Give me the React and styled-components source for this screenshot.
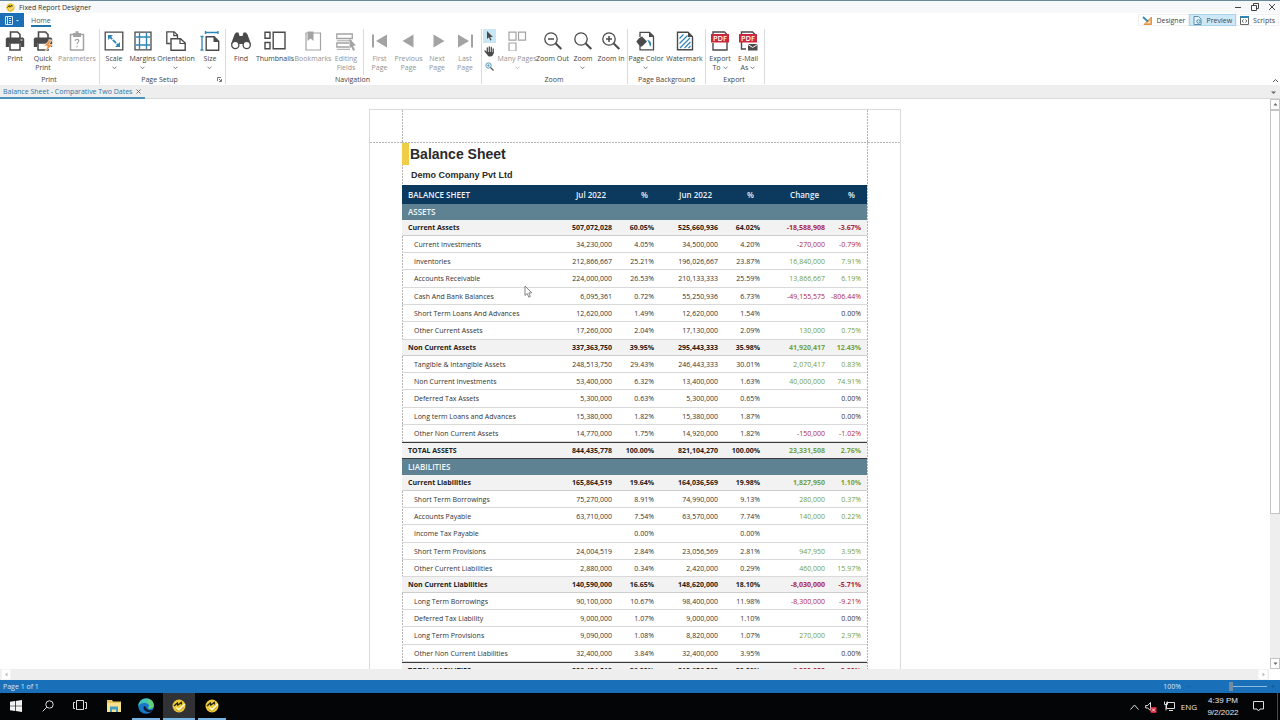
import React from "react";
import styled, { createGlobalStyle, css } from "styled-components";

const Global = createGlobalStyle`
  * { box-sizing: border-box; }
  html, body { margin: 0; height: 100%; }
  body { font-family: "Open Sans", "Noto Sans", sans-serif; font-size: 7px; line-height: 9px; color: #444; background: #fff; overflow: hidden; }
  button { font: inherit; color: inherit; border: 0; padding: 0; margin: 0; background: none; }
  svg { display: block; flex: none; }
`;

const Window = styled.div`
  height: 100vh;
  display: flex;
  flex-direction: column;
  border-top: 1px solid #67899b;
`;

/* Title bar */
const TitleBar = styled.header`
  height: 12px;
  flex: none;
  display: flex;
  align-items: center;
  gap: 4px;
  padding: 0 4px 0 6px;
  background: #f7f8f9;
`;
const Title = styled.h1`
  flex: 1;
  margin: 0;
  font-size: 7px;
  font-weight: 400;
  color: #333;
`;
const WindowButtons = styled.div`
  display: flex;
  gap: 9px;
`;

/* Ribbon tabs */
const TabRow = styled.nav`
  height: 14px;
  flex: none;
  display: flex;
  align-items: stretch;
  padding-right: 1px;
`;
const FileButton = styled.button`
  width: 24px;
  background: #1a6fb7;
  display: flex;
  align-items: center;
  justify-content: center;
  gap: 2px;
`;
const HomeTab = styled.button`
  margin-left: 7px;
  color: #3d5a70;
  padding-top: 3px;
  border-bottom: 2px solid #2273ad;
`;
const Spacer = styled.div`
  flex: 1;
`;
const ViewTabs = styled.div`
  display: flex;
  align-items: center;
`;
const ViewTab = styled.button`
  height: 12px;
  display: flex;
  align-items: center;
  gap: 4px;
  padding: 0 3px;
  border: 1px solid ${(p) => (p.$active ? "#a9d3ea" : "#f0f0f0")};
  background: ${(p) => (p.$active ? "#cde8f6" : "#fff")};
`;

/* Ribbon */
const Ribbon = styled.section`
  height: 58px;
  flex: none;
  display: flex;
  padding: 2px 0 1px;
`;
const Group = styled.div`
  display: flex;
  flex-direction: column;
  border-right: 1px solid #dadada;
  padding: 0 ${(p) => p.$padRight || 0}px 0 ${(p) => p.$padLeft || 0}px;
`;
const GroupItems = styled.div`
  flex: 1;
  display: flex;
  align-items: stretch;
`;
const GroupLabel = styled.div`
  position: relative;
  height: 9px;
  padding-right: ${(p) => (p.$launcher ? 6 : 0)}px;
  text-align: center;
  color: #444;
`;
const Launcher = styled.button`
  position: absolute;
  right: 3px;
  top: 2px;
`;
const Tool = styled.button`
  width: ${(p) => p.$w}px;
  display: flex;
  flex-direction: column;
  align-items: center;
  padding-top: 2px;
  white-space: nowrap;
  color: ${(p) => (p.$off ? "#939393" : "#444")};
`;
const ToolText = styled.span`
  display: flex;
  flex-direction: column;
  align-items: center;
  margin-top: 3px;
`;
const ToolLine = styled.span`
  display: flex;
  align-items: center;
  justify-content: center;
  gap: 2px;
  min-height: 9px;
`;
const InnerRule = styled.div`
  width: 1px;
  margin: 0 1px 0 3px;
  background: #dadada;
`;
const PointerTools = styled.div`
  width: 13px;
  margin-right: 2px;
  display: flex;
  flex-direction: column;
  gap: 1px;
`;
const PointerTool = styled.button`
  height: 14px;
  display: flex;
  align-items: center;
  justify-content: center;
  background: ${(p) => (p.$active ? "#c9e6f5" : "transparent")};
`;
const CollapseRibbon = styled.button`
  align-self: flex-end;
  padding: 0 1px 1px;
`;

/* Document tabs */
const DocTabs = styled.div`
  height: 14px;
  flex: none;
  display: flex;
  align-items: stretch;
  justify-content: space-between;
  padding-right: 4px;
  background: #eeeeee;
  box-shadow: inset 0 -1px #d9d9d9;
`;
const DocTab = styled.div`
  width: 145px;
  display: flex;
  align-items: center;
  justify-content: space-between;
  padding: 1px 4px 0 3px;
  color: #2f74a8;
  white-space: nowrap;
  border-bottom: 2px solid #4c93bb;
`;

/* Viewer */
const Viewer = styled.main`
  flex: 1;
  min-height: 0;
  display: flex;
`;
const Canvas = styled.div`
  flex: 1;
  min-width: 0;
  overflow: hidden;
  padding-top: 10px;
`;
const VScroll = styled.div`
  width: 10px;
  display: flex;
  flex-direction: column;
  background: #eeeeee;
`;
const ScrollButton = styled.button`
  width: 10px;
  height: 11px;
  display: flex;
  align-items: center;
  justify-content: center;
  background: #fff;
  border: 1px solid ${(p) => (p.$soft ? "#f4f4f4" : "#c4c4c4")};
`;
const VThumb = styled.div`
  flex: 403;
  background: #fff;
  border: 1px solid #c4c4c4;
`;
const VRest = styled.div`
  flex: 145;
`;
const HScroll = styled.div`
  height: 11px;
  flex: none;
  display: flex;
  justify-content: space-between;
  padding: 0 1px;
  margin-right: 11px;
  background: #eeeeee;
`;

/* Report page */
const Paper = styled.article`
  position: relative;
  width: 532px;
  margin: 0 auto;
  display: grid;
  grid-template-columns: 32px 1fr 32px;
  grid-template-rows: 33px 1fr;
  border: 1px solid #dadada;
  background: #fff;
`;
const guide = "#b4b4b4";
const dashX = `repeating-linear-gradient(90deg, ${guide} 0 2px, #fff 2px 3px)`;
const dashY = `repeating-linear-gradient(${guide} 0 2px, #fff 2px 3px)`;
const Margin = styled.div`
  background: ${(p) => (p.$top ? dashX : "none")} bottom / 100% 1px no-repeat;
`;
const TopMargin = styled.div`
  background:
    ${dashX} bottom / 100% 1px no-repeat,
    ${dashY} left / 1px 100% no-repeat,
    ${dashY} right / 1px 100% no-repeat;
`;
const Report = styled.div`
  padding-right: 1px;
  min-height: 600px;
  background:
    ${dashY} left / 1px 100% no-repeat,
    ${dashY} right / 1px 100% no-repeat;
`;
const ReportTitle = styled.h2`
  margin: 0;
  height: 22px;
  border-left: 7px solid #f0cd47;
  padding-left: 1px;
  font: bold 14px/23px "Liberation Sans", Arial, sans-serif;
  color: #2a2a2a;
`;
const Company = styled.h3`
  margin: 0;
  height: 20px;
  padding-left: 9px;
  font: bold 9px/20px "Liberation Sans", Arial, sans-serif;
  color: #2a2a2a;
`;
const Sheet = styled.table`
  width: 100%;
  table-layout: fixed;
  border-spacing: 0;
  font-size: 7px;
  line-height: 9px;
  color: #333;
  th, td { padding: 0 6px 0 0; text-align: right; white-space: nowrap; }
  th:first-child { text-align: left; padding-left: 6px; }
`;
const Col = styled.col`
  width: ${(p) => p.$w}px;
`;
const HeadRow = styled.tr`
  height: 19px;
  && th { padding-right: 12px; }
  th { background: #0c3a5f; color: #e9f1f7; font-size: 8px; line-height: 10px; font-weight: 600; }
`;
const SectionRow = styled.tr`
  height: 16px;
  th { background: #5f8293; color: #f2f7fa; font-size: 8px; line-height: 10px; font-weight: 600; }
`;
const GroupRow = styled.tr`
  height: 16px;
  color: #222;
  th, td { background: #f2f2f2; font-weight: 700; border-bottom: 1px solid #cdcdcd; }
`;
const TotalRow = styled(GroupRow)`
  height: 17px;
  th, td { border-top: 1px solid #3b3b3b; border-bottom: 1px solid #3b3b3b; }
`;
const ItemRow = styled.tr`
  height: 17px;
  &:nth-child(3n + 1) { height: 18px; }
  th, td { font-weight: 400; border-bottom: 1px solid #d9d9d9; }
  && th { padding-left: 12px; }
`;
const Delta = styled.td`
  ${(p) => p.$sign === "-" && css`color: #b0263a;`}
  ${(p) => p.$sign === "+" && css`color: #76a03a;`}
`;
const Pointer = styled.svg`
  position: absolute;
  left: 154px;
  top: 175px;
`;

/* Status bar */
const StatusBar = styled.footer`
  height: 13px;
  flex: none;
  display: flex;
  align-items: center;
  padding: 0 4px 0 3px;
  gap: 3px;
  background: #1a70b8;
  color: #d5e7f5;
`;
const ZoomBox = styled.label`
  margin-right: 2px;
`;
const ZoomRange = styled.input`
  appearance: none;
  width: 72px;
  height: 9px;
  margin: 0;
  background: linear-gradient(90deg, transparent 50%, #8bbbe0 50%) center / 100% 1px no-repeat;
  &::-webkit-slider-thumb { appearance: none; width: 4px; height: 9px; background: #6f8ca3; }
`;
const Sign = styled.button`
  width: 6px;
  color: #0f4f88;
`;

/* Taskbar */
const Taskbar = styled.div`
  height: 27px;
  flex: none;
  display: flex;
  align-items: stretch;
  background: #040507;
  color: #e8e8e8;
`;
const TaskButton = styled.button`
  width: ${(p) => p.$w || 33}px;
  display: flex;
  align-items: center;
  justify-content: center;
  background: ${(p) => (p.$active ? "#303236" : "transparent")};
  border-bottom: 2px solid ${(p) => (p.$open ? "#78b4e4" : "transparent")};
  background-clip: border-box;
`;
const TaskGroup = styled.div`
  display: flex;
  gap: ${(p) => p.$gap || 0}px;
`;
const Tray = styled.div`
  display: flex;
  align-items: center;
  gap: 6px;
  padding-right: 2px;
  font-size: 8px;
`;
const Clock = styled.time`
  width: 40px;
  margin-right: 4px;
  text-align: center;
  font: 8px/12px "Liberation Sans", Arial, sans-serif;
`;
const TrayEdge = styled.span`
  width: 1px;
  align-self: stretch;
  margin-left: 7px;
  background: #4a4a4a;
`;

const D = "#4a4a4a";
const G = "#a3a3a3";
const B = "#2f86b4";

const Ico = ({ children, s = 20 }) => (
  <svg width={s} height={s} viewBox="0 0 20 20" fill="none" aria-hidden="true">{children}</svg>
);
const Down = ({ c = "#777" }) => (
  <svg width="5" height="4" viewBox="0 0 5 4" fill="none" stroke={c}><path d="M.5 .7 2.5 2.7 4.5 .7" /></svg>
);
const Triangle = ({ d, c = "#666" }) => (
  <svg width="5" height="5" viewBox="0 0 5 5" fill={c}><path d={d} /></svg>
);

const printerShape = (
  <>
    <path d="M5.500 8V1h7l2.500 2.500v4" stroke={D} strokeWidth="1.600" />
    <path d="M2 6.500h16l1.200 1.200V16H16v-4H4v4H.8V7.700z" fill={D} />
    <path d="M5 12h10v7H5z" stroke={D} strokeWidth="1.600" fill="#fff" />
    <path d="M15.500 9h2" stroke="#fff" />
  </>
);
const lens = (
  <>
    <circle cx="8" cy="8" r="6.200" stroke={D} strokeWidth="1.300" />
    <path d="M12.700 12.500 18.300 18" stroke={D} strokeWidth="2" />
  </>
);
const pdfBand = (
  <>
    <rect x="1" y="3" width="18" height="8.500" fill="#c9283d" />
    <text x="10" y="9.900" textAnchor="middle" fontFamily="Open Sans" fontSize="7.500" fontWeight="600" fill="#fff">PDF</text>
  </>
);

const icons = {
  print: printerShape,
  quick: <>{printerShape}<path d="m16.500 9-5.500 6h3.500L12 20.500l8-7h-4l3-4.500z" fill="#f0903c" stroke="#fff" strokeWidth=".6" /></>,
  params: <><path d="M3.500 3.500h13v15.500h-13z" stroke={G} strokeWidth="1.500" /><path d="M6 2h2.500V.3h3V2H14v4H6z" fill={G} /><path d="M8.200 10c0-2.200 3.600-2.200 3.600 0 0 1.300-1.800 1.500-1.800 3.300M10 14.700v1.500" stroke={G} strokeWidth="1.200" /></>,
  scale: <><path d="M1.200 1.200h17.600v17.600H1.200z" stroke={D} strokeWidth="1.300" /><path d="M4 4h5L4 9zM16 16h-5l5-5z" fill={B} /><path d="m5 5 10 10" stroke={B} strokeWidth="1.800" strokeDasharray="4.500 1" /></>,
  margins: <><path d="M2 1.200h16v17.600H2z" stroke={D} strokeWidth="1.300" /><path d="M6.500 2v16M13.500 2v16M3 6h14M3 14h14" stroke={B} strokeWidth="1.400" /></>,
  orientation: <><path d="M4.500 12.500H.8V.8h7.400l3.300 3.300V7" stroke={D} strokeWidth="1.300" /><path d="M7.800 1v3.700h3.700" stroke={D} strokeWidth="1.200" /><path d="M5 7.700h9.500l4.700 4.300v7.200H5z" stroke={D} strokeWidth="1.400" fill="#fff" /><path d="M14 8v4.500h5" stroke={D} strokeWidth="1.200" /></>,
  size: <><path d="M5.500 1.500h12.500M5.500 0v3M18 0v3M2 5.500v13.500M.5 5.500h3M.5 19h3" stroke={B} strokeWidth="1.300" /><path d="M6.200 5.700h8l4.500 4.500v9H6.200z" stroke={D} strokeWidth="1.400" /><path d="M13.500 5.500V11H19z" fill={D} /></>,
  find: <><path d="M3.500 3.500 5 1.500h2.500L8.500 5h3l1-3.500H15l1.500 2L20 13H0z" fill={D} /><circle cx="4.300" cy="14" r="3.600" fill="#fff" stroke={D} strokeWidth="1.300" /><circle cx="15.700" cy="14" r="3.600" fill="#fff" stroke={D} strokeWidth="1.300" /><path d="M8.500 8h3v5h-3z" fill={D} /></>,
  bookmarks: <><path d="M3 2h14.500v17H3z" stroke={G} strokeWidth="1.200" /><path d="M4.500 .5h6v9.500l-3-2.500-3 2.500z" fill={G} /></>,
  editing: <><path d="M.8 3h15.500v4.500H.8zM13 12H.8v4H13" stroke={G} strokeWidth="1.300" /><path d="M.8 9.800h15M.8 18.300H14" stroke={G} /><path d="m13.500 7.500 6.500 7-3 .3 2 4.200-2 .8-1.800-4-1.700 1.900z" fill={G} /></>,
  first: <><path d="M3 3.500v13" stroke={G} strokeWidth="2" /><path d="M17 3.500v13L6 10z" fill={G} /></>,
  prev: <path d="M14.500 3.500v13L3.500 10z" fill={G} />,
  next: <path d="M6.500 3.500v13L17.500 10z" fill={G} />,
  last: <><path d="M17 3.500v13" stroke={G} strokeWidth="2" /><path d="M3 3.500v13L14 10z" fill={G} /></>,
  many: <path d="M2 1.200h7v8H2zM11.500 1.200h7v8h-7zM2 12h7v8H2z" stroke={G} strokeWidth="1.200" />,
  zoomOut: <>{lens}<path d="M5 8h6" stroke={D} strokeWidth="1.500" /></>,
  zoom: lens,
  zoomIn: <>{lens}<path d="M5 8h6M8 5v6" stroke={D} strokeWidth="1.500" /></>,
  pageColor: <><path d="M4 6V1.300h9.500l4 4v13.500H4V15" stroke={D} strokeWidth="1.300" /><path d="M13 1v5h4.500z" fill={D} /><path d="m.3 10.500 3-3.500L6 5.500l5 5L6 15.500H4z" fill={D} /><path d="M11 9c3.500 .2 5 3 3.500 6.500-1.300-.5-1.300-4.500-3.500-6.500z" fill={B} /></>,
  watermark: <><path d="M2.500 1.200H13l4.500 4.500v13.100h-15z" stroke={D} strokeWidth="1.400" /><path d="M13 1v5h4.500z" fill={D} /><path d="m4.500 7.500 4-4M4.500 12.500l8-8M5 17l10-10M9.500 17l6-6M13.500 17l2-2" stroke={B} strokeWidth="1.200" /></>,
  exportTo: <><path d="M3 4V1h11.500L17 3.500V19H3v-7" stroke={D} strokeWidth="1.400" />{pdfBand}</>,
  email: <><path d="M3.500 4V1h11L17 3.500M3.500 11v7H8" stroke={D} strokeWidth="1.400" />{pdfBand}<path d="M10 13h9.500v6.500H10z" fill={D} /><path d="m10 13.500 4.700 3 4.800-3" stroke="#fff" /></>,
};
const thumbIcon = (
  <svg width="22" height="20" viewBox="0 0 22 20" fill="none" stroke={D} strokeWidth="1.400">
    <path d="M1 1.200h5v6H1zM1 11.500h5v6.300H1zM9.200 1.200H21v16.600H9.200z" />
  </svg>
);

const ribbon = [
  { label: "Print", padLeft: 1, padRight: 2, items: [
    { i: "print", w: 28, t: ["Print"] },
    { i: "quick", w: 28, t: ["Quick", "Print"] },
    { i: "params", w: 40, t: ["Parameters"], off: true },
  ] },
  { label: "Page Setup", launcher: true, items: [
    { i: "scale", w: 28, t: ["Scale"], menu: true },
    { i: "margins", w: 29, t: ["Margins"], menu: true },
    { i: "orientation", w: 38, t: ["Orientation"], menu: true },
    { i: "size", w: 30, t: ["Size"], menu: true },
  ] },
  { label: "Navigation", padRight: 2, items: [
    { i: "find", w: 30, t: ["Find"] },
    { i: "thumbs", w: 38, t: ["Thumbnails"] },
    { i: "bookmarks", w: 38, t: ["Bookmarks"], off: true },
    { i: "editing", w: 28, t: ["Editing", "Fields"], off: true },
    { rule: true },
    { i: "first", w: 29, t: ["First", "Page"], off: true },
    { i: "prev", w: 29, t: ["Previous", "Page"], off: true },
    { i: "next", w: 28, t: ["Next", "Page"], off: true },
    { i: "last", w: 28, t: ["Last", "Page"], off: true },
  ] },
  { label: "Zoom", padLeft: 1, padRight: 2, pointers: true, items: [
    { i: "many", w: 38, t: ["Many Pages"], off: true, menu: true },
    { i: "zoomOut", w: 33, t: ["Zoom Out"] },
    { i: "zoom", w: 28, t: ["Zoom"], menu: true },
    { i: "zoomIn", w: 28, t: ["Zoom In"] },
  ] },
  { label: "Page Background", items: [
    { i: "pageColor", w: 36, t: ["Page Color"], menu: true },
    { i: "watermark", w: 41, t: ["Watermark"] },
  ] },
  { label: "Export", padRight: 2, items: [
    { i: "exportTo", w: 28, t: ["Export", "To"], inline: true },
    { i: "email", w: 28, t: ["E-Mail", "As"], inline: true },
  ] },
];

const RibbonTool = ({ item }) => (
  <Tool $w={item.w} $off={item.off} type="button">
    {item.i === "thumbs" ? thumbIcon : <Ico>{icons[item.i]}</Ico>}
    <ToolText>
      {item.t.map((line, n) => (
        <ToolLine key={line}>{line}{item.inline && n === 1 && <Down />}</ToolLine>
      ))}
      {item.menu && <ToolLine><Down c={item.off ? "#bbb" : "#777"} /></ToolLine>}
    </ToolText>
  </Tool>
);

const Pointers = () => (
  <PointerTools>
    <PointerTool $active type="button" aria-label="Select">
      <svg width="7" height="10" viewBox="0 0 7 10" fill={D}><path d="M1 0v8l2-1.800L4.300 9.500l1.200-.5-1.300-3H7z" /></svg>
    </PointerTool>
    <PointerTool type="button" aria-label="Hand">
      <svg width="11" height="11" viewBox="0 0 11 11" fill="none" stroke={D} strokeWidth="1.300" strokeLinecap="round"><path d="M3.300 6V2M5.300 6V1M7.300 6V1.500M9.200 6.500V3M1 5l2.500 3" /><path d="M3 6h6.700c0 2.500-1 4.500-3.700 4.500S3.300 8.500 3 6z" fill={D} stroke="none" /></svg>
    </PointerTool>
    <PointerTool type="button" aria-label="Magnifier">
      <svg width="9" height="9" viewBox="0 0 9 9" fill="#d8edf7" stroke="#6ba2bd"><circle cx="3.500" cy="3.500" r="2.700" /><path d="m5.500 5.500 3 3" stroke="#666" strokeWidth="1.400" /><path d="M2 3.500h3M3.500 2v3" strokeWidth=".7" /></svg>
    </PointerTool>
  </PointerTools>
);

const AppLogo = ({ s }) => (
  <svg width={s} height={s} viewBox="0 0 14 14">
    <circle cx="7" cy="7" r="6.500" fill="#efcb35" />
    <path d="M2 7 5.300 4 5.800 6 9.300 3.500 9.500 5.500" fill="none" stroke="#2a2618" strokeWidth="1.400" />
    <path d="m4.500 8.500 2.500 2.300L12.800 5" fill="none" stroke="#fff8d8" strokeWidth="1.500" />
    <path d="m3.800 10.300 3.200 2.200L12 8" fill="none" stroke="#a5861c" strokeWidth=".6" />
  </svg>
);

const sheet = [
  { section: "ASSETS", groups: [
    { head: ["Current Assets", "507,072,028", "60.05%", "525,660,936", "64.02%", "-18,588,908", "-3.67%"], rows: [
      ["Current Investments", "34,230,000", "4.05%", "34,500,000", "4.20%", "-270,000", "-0.79%"],
      ["Inventories", "212,866,667", "25.21%", "196,026,667", "23.87%", "16,840,000", "7.91%"],
      ["Accounts Receivable", "224,000,000", "26.53%", "210,133,333", "25.59%", "13,866,667", "6.19%"],
      ["Cash And Bank Balances", "6,095,361", "0.72%", "55,250,936", "6.73%", "-49,155,575", "-806.44%"],
      ["Short Term Loans And Advances", "12,620,000", "1.49%", "12,620,000", "1.54%", "", "0.00%"],
      ["Other Current Assets", "17,260,000", "2.04%", "17,130,000", "2.09%", "130,000", "0.75%"],
    ] },
    { head: ["Non Current Assets", "337,363,750", "39.95%", "295,443,333", "35.98%", "41,920,417", "12.43%"], rows: [
      ["Tangible & Intangible Assets", "248,513,750", "29.43%", "246,443,333", "30.01%", "2,070,417", "0.83%"],
      ["Non Current Investments", "53,400,000", "6.32%", "13,400,000", "1.63%", "40,000,000", "74.91%"],
      ["Deferred Tax Assets", "5,300,000", "0.63%", "5,300,000", "0.65%", "", "0.00%"],
      ["Long term Loans and Advances", "15,380,000", "1.82%", "15,380,000", "1.87%", "", "0.00%"],
      ["Other Non Current Assets", "14,770,000", "1.75%", "14,920,000", "1.82%", "-150,000", "-1.02%"],
    ] },
  ], total: ["TOTAL ASSETS", "844,435,778", "100.00%", "821,104,270", "100.00%", "23,331,508", "2.76%"] },
  { section: "LIABILITIES", groups: [
    { head: ["Current Liabilities", "165,864,519", "19.64%", "164,036,569", "19.98%", "1,827,950", "1.10%"], rows: [
      ["Short Term Borrowings", "75,270,000", "8.91%", "74,990,000", "9.13%", "280,000", "0.37%"],
      ["Accounts Payable", "63,710,000", "7.54%", "63,570,000", "7.74%", "140,000", "0.22%"],
      ["Income Tax Payable", "", "0.00%", "", "0.00%", "", ""],
      ["Short Term Provisions", "24,004,519", "2.84%", "23,056,569", "2.81%", "947,950", "3.95%"],
      ["Other Current Liabilities", "2,880,000", "0.34%", "2,420,000", "0.29%", "460,000", "15.97%"],
    ] },
    { head: ["Non Current Liabilities", "140,590,000", "16.65%", "148,620,000", "18.10%", "-8,030,000", "-5.71%"], rows: [
      ["Long Term Borrowings", "90,100,000", "10.67%", "98,400,000", "11.98%", "-8,300,000", "-9.21%"],
      ["Deferred Tax Liability", "9,000,000", "1.07%", "9,000,000", "1.10%", "", "0.00%"],
      ["Long Term Provisions", "9,090,000", "1.08%", "8,820,000", "1.07%", "270,000", "2.97%"],
      ["Other Non Current Liabilities", "32,400,000", "3.84%", "32,400,000", "3.95%", "", "0.00%"],
    ] },
  ], total: ["TOTAL LIABILITIES", "306,454,519", "36.29%", "312,656,569", "38.08%", "-6,202,050", "-2.02%"] },
];

const Cells = ({ row }) => {
  const sign = !row[5] ? "" : row[5][0] === "-" ? "-" : "+";
  return (
    <>
      <th scope="row">{row[0]}</th>
      {row.slice(1, 5).map((v, n) => <td key={n}>{v}</td>)}
      <Delta $sign={sign}>{row[5]}</Delta>
      <Delta $sign={sign}>{row[6]}</Delta>
    </>
  );
};

const BalanceTable = () => (
  <Sheet>
    <colgroup>
      {[151, 65, 42, 64, 42, 65, 36].map((w, n) => <Col key={n} $w={w} />)}
    </colgroup>
    <thead>
      <HeadRow>
        {["BALANCE SHEET", "Jul 2022", "%", "Jun 2022", "%", "Change", "%"].map((h, n) => <th key={n} scope="col">{h}</th>)}
      </HeadRow>
    </thead>
    {sheet.map((part) => (
      <React.Fragment key={part.section}>
        <tbody><SectionRow><th colSpan={7}>{part.section}</th></SectionRow></tbody>
        {part.groups.map((g) => (
          <tbody key={g.head[0]}>
            <GroupRow><Cells row={g.head} /></GroupRow>
            {g.rows.map((r) => <ItemRow key={r[0]}><Cells row={r} /></ItemRow>)}
          </tbody>
        ))}
        <tbody><TotalRow><Cells row={part.total} /></TotalRow></tbody>
      </React.Fragment>
    ))}
  </Sheet>
);

export default function App() {
  return (
    <Window>
      <Global />
      <TitleBar>
        <AppLogo s={9} />
        <Title>Fixed Report Designer</Title>
        <WindowButtons>
          <button type="button" aria-label="Minimize"><svg width="8" height="8" stroke="#444"><path d="M1 4.500h6" /></svg></button>
          <button type="button" aria-label="Restore"><svg width="8" height="8" fill="none" stroke="#444"><path d="M.5 2.500h5v5h-5zM2.500 2.500v-2h5v5h-2" /></svg></button>
          <button type="button" aria-label="Close"><svg width="8" height="8" stroke="#444"><path d="m1 1 6 6M7 1 1 7" /></svg></button>
        </WindowButtons>
      </TitleBar>

      <TabRow>
        <FileButton type="button" aria-label="File">
          <svg width="8" height="9" viewBox="0 0 8 9" fill="none" stroke="#d5e8f6"><path d="M.5 .5h7v8h-7zM2.500 .5v8M4 2.500h2M4 4.500h2M4 6.500h2" /></svg>
          <Triangle c="#d5e8f6" d="M1 2h3L2.500 3.500z" />
        </FileButton>
        <HomeTab type="button">Home</HomeTab>
        <Spacer />
        <ViewTabs>
          <ViewTab type="button">
            <svg width="10" height="9" viewBox="0 0 10 9" fill="none"><path d="M9.500 1v7.500H2z" fill="#f0b26a" stroke="#e09440" /><path d="M7.800 5v2H5.500z" fill="#fff" /><path d="m1 1 5 4.500" stroke="#2f86b4" strokeWidth="1.700" /></svg>
            Designer
          </ViewTab>
          <ViewTab type="button" $active>
            <svg width="9" height="9" viewBox="0 0 9 9" fill="none"><path d="M1 .5h4.500L8 3v5.500H1z" stroke="#5f8da5" fill="#e7f4fb" /><circle cx="5.500" cy="5.500" r="1.700" stroke="#2f86b4" /></svg>
            Preview
          </ViewTab>
          <ViewTab type="button">
            <svg width="9" height="9" viewBox="0 0 9 9" fill="none" stroke="#666"><path d="M.5 .5h8v8h-8z" /><path d="M0 1h9" stroke="#2f86b4" strokeWidth="2" /><path d="M3.500 3.500 2.200 5l1.300 1.500M5.500 3.500 6.800 5 5.500 6.500" /></svg>
            Scripts
          </ViewTab>
        </ViewTabs>
      </TabRow>

      <Ribbon>
        {ribbon.map((g) => (
          <Group key={g.label} $padLeft={g.padLeft} $padRight={g.padRight}>
            <GroupItems>
              {g.pointers && <Pointers />}
              {g.items.map((it, n) => (it.rule ? <InnerRule key={n} /> : <RibbonTool key={it.i} item={it} />))}
            </GroupItems>
            <GroupLabel $launcher={g.launcher}>
              {g.label}
              {g.launcher && (
                <Launcher type="button" aria-label="Page Setup options">
                  <svg width="5" height="5" fill="none" stroke="#777"><path d="M.5 4V.5H4M2 2l2.500 2.500M4.500 2v2.500H2" /></svg>
                </Launcher>
              )}
            </GroupLabel>
          </Group>
        ))}
        <Spacer />
        <CollapseRibbon type="button" aria-label="Collapse ribbon">
          <svg width="7" height="5" fill="none" stroke="#555"><path d="m1 4 2.500-2.500L6 4" /></svg>
        </CollapseRibbon>
      </Ribbon>

      <DocTabs>
        <DocTab>
          <span>Balance Sheet - Comparative Two Dates</span>
          <button type="button" aria-label="Close tab"><svg width="5" height="5" stroke="#777"><path d="M.5 .5l4 4M4.500 .5l-4 4" /></svg></button>
        </DocTab>
        <button type="button" aria-label="Tab list"><Triangle d="M0 1.500h5L2.500 4z" /></button>
      </DocTabs>

      <Viewer>
        <Canvas>
          <Paper>
            <Margin $top />
            <TopMargin />
            <Margin $top />
            <Margin />
            <Report>
              <ReportTitle>Balance Sheet</ReportTitle>
              <Company>Demo Company Pvt Ltd</Company>
              <BalanceTable />
            </Report>
            <Margin />
            <Pointer width="9" height="13" viewBox="0 0 9 13" fill="#fff" stroke="#777" strokeWidth=".9"><path d="M1 1v9.500l2.200-2 1.600 3.600 1.600-.7-1.600-3.500h3z" /></Pointer>
          </Paper>
        </Canvas>
        <VScroll>
          <ScrollButton type="button" aria-label="Scroll up"><Triangle d="M.5 3.500h4L2.500 1z" /></ScrollButton>
          <VThumb />
          <VRest />
          <ScrollButton type="button" aria-label="Scroll down"><Triangle d="M.5 1.500h4L2.500 4z" /></ScrollButton>
        </VScroll>
      </Viewer>
      <HScroll>
        <ScrollButton $soft type="button" aria-label="Scroll left"><Triangle c="#bbb" d="M3.500 .5v4L1 2.500z" /></ScrollButton>
        <ScrollButton $soft type="button" aria-label="Scroll right"><Triangle c="#bbb" d="M1.500 .5v4L4 2.500z" /></ScrollButton>
      </HScroll>

      <StatusBar>
        <span>Page 1 of 1</span>
        <Spacer />
        <ZoomBox htmlFor="zoom">100%</ZoomBox>
        <Sign type="button" aria-label="Zoom out">−</Sign>
        <ZoomRange id="zoom" type="range" min="0" max="200" defaultValue="100" />
        <Sign type="button" aria-label="Zoom in">+</Sign>
      </StatusBar>

      <Taskbar>
        <TaskGroup>
          <TaskButton type="button" aria-label="Start" $w={32}>
            <svg width="12" height="12" fill="#f2f2f2"><path d="M0 1.700 5 1v4.700H0zM5.700 .9 12 0v5.700H5.700zM0 6.300h5V11l-5-.7zM5.700 6.300H12V12l-6.300-.9z" /></svg>
          </TaskButton>
          <TaskButton type="button" aria-label="Search" $w={32}>
            <svg width="12" height="12" fill="none" stroke="#ddd"><circle cx="7.500" cy="4.500" r="3.700" /><path d="M4.800 7.200.7 11.300" /></svg>
          </TaskButton>
          <TaskButton type="button" aria-label="Task view" $w={32}>
            <svg width="14" height="11" fill="none" stroke="#ddd"><path d="M3.500 .5h7v9h-7zM2 2.500H.5v6H2M12 2.500h1.500v6H12" /></svg>
          </TaskButton>
          <TaskButton type="button" aria-label="File Explorer" $w={36}>
            <svg width="14" height="12"><path d="M0 0h5l1 1.500h8V12H0z" fill="#e9c65f" /><path d="M0 3h14v9H0z" fill="#f8e08e" /><path d="M3 6.500h8V12H9V9.500H5V12H3z" fill="#3f9fc4" /></svg>
          </TaskButton>
        </TaskGroup>
        <TaskGroup $gap={3}>
          <TaskButton type="button" aria-label="Edge" $open $w={28}>
            <svg width="16" height="16" viewBox="0 0 16 16">
              <circle cx="8" cy="8" r="7.800" fill="#1b78c8" />
              <path d="M.5 6.500C2 1.500 7-.5 11 1c4 1.500 5.500 5 4.500 8-1 2-4 2-5.500 1 2-2 .5-5-3-5C4 5 1.500 5.500.5 8.500z" fill="#45c6b4" />
              <path d="M10 .7c4 1 6.300 5 5.300 8.300-1 2-4 2-5.500 1 2.500-2 1.500-5-1-6z" fill="#62d07c" />
              <path d="M6 8c-1.500 3 1 6.500 6.500 6 1-.5 2-1.500 2.500-2.500-3 1.500-7 .5-7-2.500z" fill="#0b1f38" />
            </svg>
          </TaskButton>
          <TaskButton type="button" aria-label="Report app" $open $active $w={32}>
            <AppLogo s={14} />
          </TaskButton>
          <TaskButton type="button" aria-label="Report app, second window" $open $w={28}>
            <AppLogo s={14} />
          </TaskButton>
        </TaskGroup>
        <Spacer />
        <Tray>
          <svg width="9" height="6" fill="none" stroke="#ddd"><path d="M.5 5.500 4.500 1l4 4.500" /></svg>
          <svg width="12" height="12" fill="none" stroke="#ddd"><path d="M.7 4.500h2L5.500 1.500v8L2.700 7H.7z" /><rect x="5.500" y="6" width="6" height="6" rx="1" fill="#d6283c" stroke="none" /><path d="m7 7.500 3 3M10 7.500l-3 3" stroke="#fff" strokeWidth=".8" /></svg>
          <svg width="12" height="11" fill="none" stroke="#ddd"><path d="M3.500 1.500h8v6h-8zM6 9.500h4M1.500 .5v3h3v-3M3 3.500v6" /></svg>
          <span>ENG</span>
          <Clock>4:39 PM<br />9/2/2022</Clock>
          <svg width="11" height="11" fill="none" stroke="#ddd"><path d="M.5 .5h10v7.500H7L5.500 10 4 8H.5z" /></svg>
          <TrayEdge />
        </Tray>
      </Taskbar>
    </Window>
  );
}
